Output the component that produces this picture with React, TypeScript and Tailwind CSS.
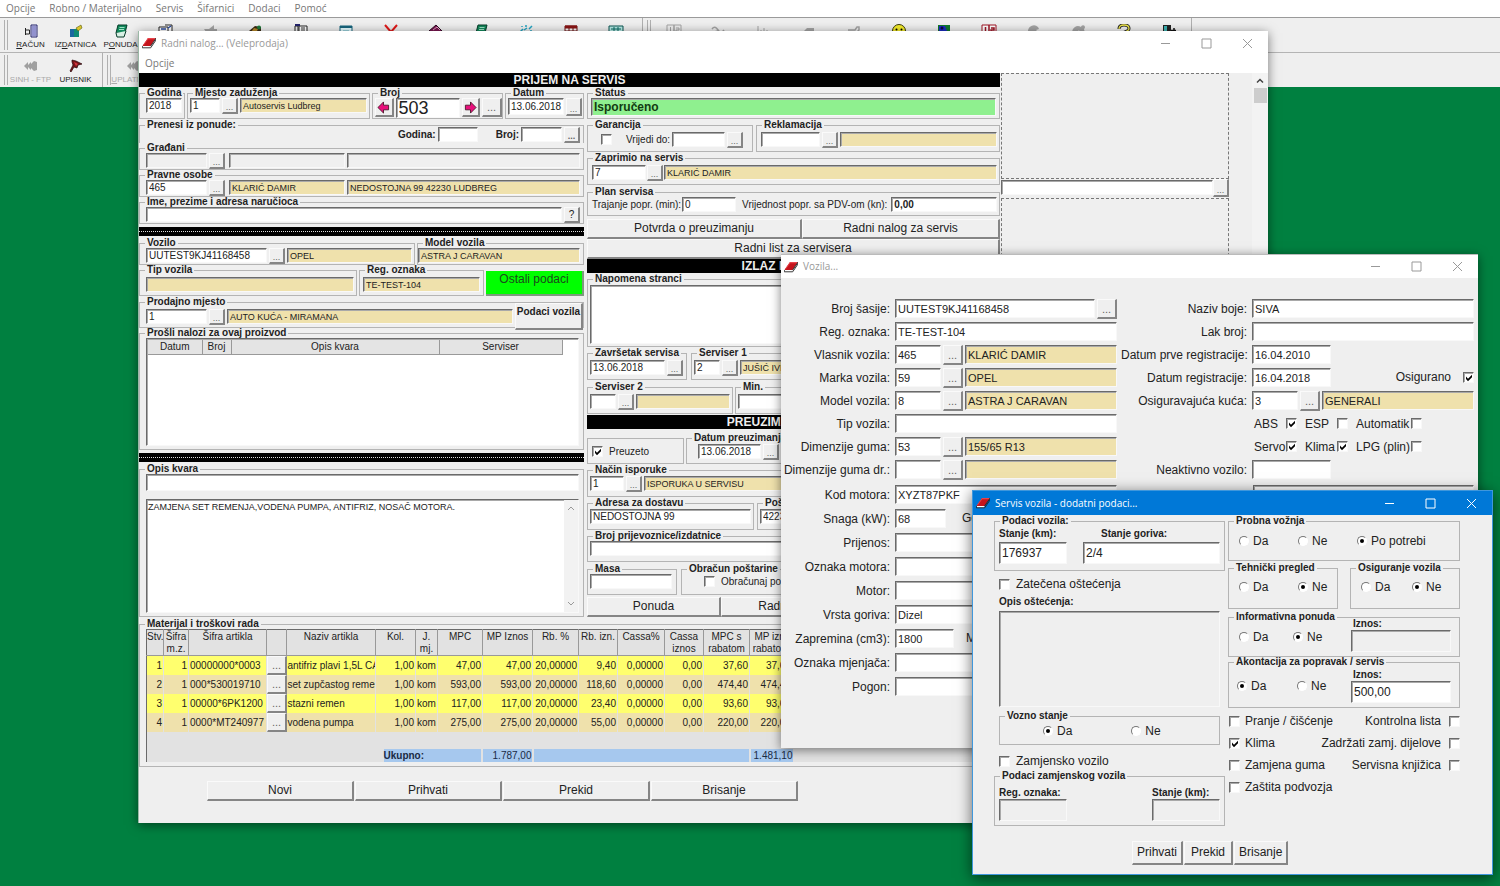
import type { ReactNode } from 'react';

type Size = 'sm' | 'lg';
type Tone = 'white' | 'wheat' | 'gray';

const sunken =
  'border border-t-[#6a6a6a] border-l-[#6a6a6a] border-r-[#f8f8f8] border-b-[#f8f8f8] shadow-[inset_1px_1px_0_#a9a9a9] rounded-none outline-none';
const raised =
  'border-t border-l border-r-2 border-b-2 border-t-[#fafafa] border-l-[#fafafa] border-r-[#858585] border-b-[#858585] bg-[#efefef] text-[#222]';

const toneClass: Record<Tone, string> = {
  white: 'bg-white',
  wheat: 'bg-[#efe1ac]',
  gray: 'bg-[#efefef]',
};

function Field({ label, value = '', tone = 'white', size = 'sm', className = '' }: {
  label: string;
  value?: string;
  tone?: Tone;
  size?: Size;
  className?: string;
}) {
  const smText = tone === 'wheat' ? 'text-[9px]' : 'text-[10px]';
  const sizing = size === 'sm' ? `h-[15px] pl-0.5 ${smText}` : 'h-[19px] pl-0.5 text-[11px]';
  return (
    <input
      aria-label={label}
      defaultValue={value}
      readOnly={tone !== 'white'}
      className={`min-w-0 shrink-0 text-[#222] ${sunken} ${toneClass[tone]} ${sizing} ${className}`}
    />
  );
}

function Dots({ label, size = 'sm', className = '' }: { label: string; size?: Size; className?: string }) {
  return (
    <button
      aria-label={label}
      className={`flex shrink-0 items-end justify-center leading-none text-[#666] ${raised} ${
        size === 'sm' ? 'h-4 w-4 text-[9px]' : 'h-5 w-5 pb-0.5 text-[11px]'
      } ${className}`}
    >
      ...
    </button>
  );
}

function Button({ children, className = '' }: { children: ReactNode; className?: string }) {
  return <button className={`text-[12px] leading-[15px] ${raised} ${className}`}>{children}</button>;
}

function Group({ title, box = '', className = '', children }: {
  title: string;
  box?: string;
  className?: string;
  children: ReactNode;
}) {
  return (
    <fieldset className={`min-w-0 border border-[#b4b4b4] ${box}`}>
      <legend className="ml-[5px] px-0.5 text-[10px] leading-[10px] font-bold whitespace-nowrap">{title}</legend>
      <div className={`flex items-start ${className}`}>{children}</div>
    </fieldset>
  );
}

function Check({ label, checked = false, before = false, className = '', small = false }: {
  label: string;
  checked?: boolean;
  before?: boolean;
  className?: string;
  small?: boolean;
}) {
  return (
    <label
      className={`flex items-center whitespace-nowrap ${small ? 'text-[10px]' : 'text-[12px]'} ${
        before ? 'flex-row-reverse' : ''
      } ${className}`}
    >
      <span className="grid shrink-0">
        <input
          type="checkbox"
          defaultChecked={checked}
          className={`peer col-start-1 row-start-1 h-[11px] w-[11px] appearance-none bg-white ${sunken}`}
        />
        <svg
          viewBox="0 0 11 11"
          className="pointer-events-none col-start-1 row-start-1 hidden h-[11px] w-[11px] peer-checked:block"
        >
          <path d="M3 4.600 5 6.800 9 2.800V5.200L5 9.200 3 7z" fill="#000" />
        </svg>
      </span>
      <span>{label}</span>
    </label>
  );
}

function Radio({ label, name, checked = false, className = '' }: {
  label: string;
  name: string;
  checked?: boolean;
  className?: string;
}) {
  return (
    <label className={`flex items-center gap-1 text-[12px] leading-[14px] ${className}`}>
      <span className="grid">
        <input
          type="radio"
          name={name}
          defaultChecked={checked}
          className="peer col-start-1 row-start-1 h-[10px] w-[10px] appearance-none rounded-full border border-t-[#777] border-l-[#777] border-r-white border-b-white bg-white"
        />
        <svg
          viewBox="0 0 10 10"
          className="pointer-events-none col-start-1 row-start-1 hidden h-[10px] w-[10px] peer-checked:block"
        >
          <circle cx="5" cy="5" r="2" fill="#000" />
        </svg>
      </span>
      {label}
    </label>
  );
}

function BookIcon() {
  return (
    <svg viewBox="0 0 14 12" className="h-3 w-3.5 shrink-0">
      <path d="M6 1h8L8.500 9H0.500z" fill="#c4141c" />
      <path d="M6 1h8l-.8 1.200H6.200L2 8H1z" fill="#e8434a" />
      <path d="M.5 9h8l-.3 1.500H1z" fill="#fff" />
      <path d="M.3 9v1.800h8.400L14 3V1.300L8.500 9.200" fill="none" stroke="#222" strokeWidth=".9" />
    </svg>
  );
}

function TitleBar({ title, active = false, className = '' }: { title: string; active?: boolean; className?: string }) {
  return (
    <header
      className={`flex items-center pl-[3px] font-["Open_Sans",sans-serif] text-[10px] ${
        active ? 'bg-[#0078d7] text-white' : 'bg-white text-[#999]'
      } ${className}`}
    >
      <BookIcon />
      <h2 className="ml-[5px] flex-1">{title}</h2>
      <div className="flex">
        <button aria-label="Minimize" className="flex w-[41px] justify-center">
          <svg viewBox="0 0 11 11" className="h-[11px] w-[11px]" stroke="currentColor">
            <path d="M1 5.500h9" />
          </svg>
        </button>
        <button aria-label="Maximize" className="flex w-[41px] justify-center">
          <svg viewBox="0 0 11 11" className="h-[11px] w-[11px]" stroke="currentColor" fill="none">
            <path d="M1 1h9v9H1z" />
          </svg>
        </button>
        <button aria-label="Close" className="flex w-[41px] justify-center">
          <svg viewBox="0 0 11 11" className="h-[11px] w-[11px]" stroke="currentColor">
            <path d="M1 1l9 9M10 1l-9 9" />
          </svg>
        </button>
      </div>
    </header>
  );
}

function BlackBar({ children, className = '' }: { children: ReactNode; className?: string }) {
  return (
    <h3 className={`h-[14px] bg-black text-center text-[12px] leading-[14px] font-bold text-[#eee] ${className}`}>
      {children}
    </h3>
  );
}

function Stripes() {
  return (
    <div className="mt-[3px] mb-0.5 h-[9px] border-y-[3px] border-black bg-black">
      <div className="mt-px border-t border-dotted border-[#ddd]" />
    </div>
  );
}

/* ---------- toolbar ---------- */

const icons: Record<string, ReactNode> = {
  invoice: (
    <>
      <path d="M8 1h6v12H8z" fill="#dcdcf4" stroke="#22226a" />
      <path d="M9 3h4M9 5h4M9 7h4M9 9h4M9 11h4" stroke="#4747a8" />
      <path d="M2.500 4v7M2.500 6h4v4h-4" fill="none" stroke="#222" />
    </>
  ),
  issue: (
    <>
      <path d="M2 5h9v8H2z" fill="#0e8a74" />
      <path d="M2 5h4v8H2z" fill="#1a66a0" />
      <path d="M8 4l5-3 1 3-4 3z" fill="#d9c62c" stroke="#5c5c10" strokeWidth=".6" />
    </>
  ),
  offer: (
    <>
      <path d="M5 1h9l-2 8H3z" fill="#128a5c" stroke="#063b28" />
      <path d="M3 9l1 4h7l2-6" fill="#d8f0e4" stroke="#063b28" />
      <path d="M6.500 3.500h5M6 5.500h5" stroke="#9fe0c4" />
    </>
  ),
  card: (
    <>
      <path d="M1 3h9v9H1zM7 1h7v9" fill="#fff" stroke="#222" />
      <path d="M3 5h5M10 4l3-2" stroke="#2a4aa0" strokeWidth="1.500" />
    </>
  ),
  grayTool: <path d="M1 5h5l5-4v4h3v3H9l-4 3z" fill="#a5a5a5" />,
  handshake: (
    <>
      <path d="M1 7l6-5 6 1v6H3z" fill="#3a2a12" />
      <path d="M6 4l4 1-2 4-5-1z" fill="#b98a2a" />
      <circle cx="11" cy="3.500" r="2" fill="#1c7a3a" />
    </>
  ),
  phone: (
    <>
      <path d="M2 2h3v11H2z" fill="none" stroke="#222" />
      <path d="M6 2h8v11H6z" fill="#fff" stroke="#222" />
      <path d="M8 4h4M8 6h4" stroke="#333" />
      <path d="M2 1h5" stroke="#22226a" strokeWidth="2" />
    </>
  ),
  calendar: (
    <>
      <path d="M2 2h12v11H2z" fill="#e4fbff" stroke="#16647c" />
      <path d="M2 3h12" stroke="#16647c" strokeWidth="2" />
      <path d="M5 7h6" stroke="#58aebe" />
    </>
  ),
  cross: <path d="M2 1l6 7 6-7M8 7l-5 5M8 7l5 5" fill="none" stroke="#e01818" strokeWidth="2" />,
  books: (
    <>
      <path d="M1 7l7-6 6 6-6 5z" fill="#7a1650" stroke="#2a0820" />
      <path d="M5 6l4-3 3 3" fill="none" stroke="#e4a0c4" />
    </>
  ),
  sparks: <path d="M2 8l3-3M6 6l3-2M11 5l3-3M8 1v2M4 2v1M12 7h2" stroke="#23a6c4" strokeWidth="1.500" />,
  tableRed: (
    <>
      <path d="M2 2h12v11H2z" fill="#fff" stroke="#6a1010" />
      <path d="M2 3h12" stroke="#8a1414" strokeWidth="3" />
      <path d="M2 7h12M6 4v9M10 4v9" stroke="#6a1010" />
    </>
  ),
  tableTeal: (
    <>
      <path d="M1 2h14v11H1z" fill="#b8ece8" stroke="#0a5550" />
      <path d="M3 5h10M3 8h10M6 3v10M10 3v10" stroke="#0a6c64" />
    </>
  ),
  cardsGray: (
    <>
      <path d="M1 1h7v10H1zM8 1h7v10H8z" fill="none" stroke="#a5a5a5" />
      <path d="M4.500 3v6M10 4h3v2h-3v3h3" fill="none" stroke="#a5a5a5" />
    </>
  ),
  wavesGray: <path d="M1 5q3-4 6 1t6 0M3 9q3-4 6 1" fill="none" stroke="#a5a5a5" strokeWidth="1.500" />,
  chartGray: <path d="M2 2v10h12M5 12V6M8 12V4M11 12V6" fill="none" stroke="#a5a5a5" />,
  boxGray: <path d="M2 8l4-4h7v5l-4 3H2z" fill="#a5a5a5" />,
  wrenchGray: <path d="M2 6h7l2-3 2 0v3l-3 3H2" fill="none" stroke="#a5a5a5" strokeWidth="1.500" />,
  smiley: (
    <>
      <circle cx="8" cy="7" r="6.500" fill="#f6ee2a" stroke="#3a3a08" />
      <circle cx="5.500" cy="5.500" r="1" />
      <circle cx="10.500" cy="5.500" r="1" />
      <path d="M4.500 9q3.500 3 7 0" fill="none" stroke="#000" />
    </>
  ),
  picture: (
    <>
      <path d="M2 1h12v12H2z" fill="#107a2a" />
      <path d="M3 2h6l2 5-3 3-5-3z" fill="#1c2cc4" />
      <circle cx="6" cy="4" r="1.500" fill="#0a0a40" />
    </>
  ),
  cardsRed: (
    <>
      <path d="M1 1h7v11H1zM8 1h7v11H8z" fill="#fff" stroke="#a01424" />
      <path d="M4.500 3v6M10 4h3v2h-3v3h3" fill="none" stroke="#a01424" strokeWidth="1.500" />
    </>
  ),
  globeGray: <path d="M2 8a6 6 0 0 1 10-5l1 2-3 1 3 3H2z" fill="#a5a5a5" />,
  moonGray: <path d="M1 9a6 6 0 0 1 9-6 2 2 0 1 1 3 2l1 4H9L8 6 6 9z" fill="#a5a5a5" />,
  help: (
    <>
      <path d="M3 5q0-4 5-4t5 3.500q0 2-4 3.500v2" fill="none" stroke="#222" strokeWidth="3" />
      <path d="M3 5q0-4 5-4t5 3.500q0 2-4 3.500v2" fill="none" stroke="#eee64a" strokeWidth="1.300" />
    </>
  ),
  exit: (
    <>
      <path d="M2 1h8v12H2z" fill="#222" />
      <path d="M3 2h3v10H3z" fill="#3cb4b4" />
      <path d="M10 6.500h5M13 4v5" stroke="#111" strokeWidth="1.500" />
    </>
  ),
  syncGray: <path d="M1 7l4-4v3l3-3v2l3-3 3 1v8l-3 1-3-3v2L5 8v3z" fill="#a0a0a0" />,
  pin: (
    <>
      <path d="M4 1l4 1 6 3-4 1-1 3-3-1-3 5-1-1 3-6-1-3z" fill="#7a1418" stroke="#240608" strokeWidth=".7" />
      <path d="M6 3l4 2-2 2z" fill="#d83840" />
    </>
  ),
};

const toolbarMain = [
  { icon: 'invoice', pre: '', key: 'R', post: 'AČUN' },
  { icon: 'issue', pre: 'IZ', key: 'D', post: 'ATNICA' },
  { icon: 'offer', pre: 'P', key: 'O', post: 'NUDA' },
  { icon: 'card' }, { icon: 'grayTool' }, { icon: 'handshake' }, { icon: 'phone' },
  { icon: 'calendar' }, { icon: 'cross' }, { icon: 'books' }, { icon: 'offer' },
  { icon: 'sparks' }, { icon: 'tableRed' }, { icon: 'tableTeal' },
];

const toolbarSide = [
  'cardsGray', 'wavesGray', 'chartGray', 'boxGray', 'wrenchGray', 'smiley',
  'picture', 'cardsRed', 'globeGray', 'moonGray', 'help', 'exit',
];

function ToolButton({ icon, children }: { icon: string; children?: ReactNode }) {
  return (
    <button aria-label={icon} className="flex w-[45px] shrink-0 flex-col items-center gap-0.5 pt-1.5 whitespace-nowrap">
      <svg viewBox="0 0 16 14" className="h-3.5 w-4">{icons[icon]}</svg>
      <span className="text-[8px] leading-[10px]">{children}</span>
    </button>
  );
}

function Grip() {
  return <div className="my-0.5 w-1 shrink-0 border-x border-[#b0b0b0]" />;
}

function AppToolbar() {
  return (
    <div className="border-t border-[#9a9a9a] bg-[#efefef]">
      <div className="flex h-[35px] border-b border-[#b4b4b4] pl-1">
        <Grip />
        {toolbarMain.map((t, i) => (
          <ToolButton key={i} icon={t.icon}>
            {t.pre}<u>{t.key}</u>{t.post}
          </ToolButton>
        ))}
        <div className="mr-1 ml-1 w-px bg-[#b0b0b0]" />
        <Grip />
        {toolbarSide.map((icon) => <ToolButton key={icon} icon={icon} />)}
        <div className="w-px bg-[#b0b0b0]" />
      </div>
      <div className="flex h-[34px] pl-1">
        <Grip />
        <ToolButton icon="syncGray"><span className="text-[#aaa]">SINH - FTP</span></ToolButton>
        <ToolButton icon="pin">UPISNIK</ToolButton>
        <div className="mr-1 ml-1 w-px bg-[#b0b0b0]" />
        <Grip />
        <ToolButton icon="syncGray"><span className="text-[#aaa]"><u>U</u>PLATNICA</span></ToolButton>
      </div>
    </div>
  );
}

/* ---------- work order window ---------- */

const items = [
  ['1', '1', '00000000*0003', 'antifriz plavi 1,5L CA', '1,00', 'kom', '47,00', '47,00', '20,00000', '9,40', '0,00000', '0,00', '37,60', '37,60'],
  ['2', '1', '000*530019710', 'set zupčastog reme', '1,00', 'kom', '593,00', '593,00', '20,00000', '118,60', '0,00000', '0,00', '474,40', '474,40'],
  ['3', '1', '00000*6PK1200', 'stazni remen', '1,00', 'kom', '117,00', '117,00', '20,00000', '23,40', '0,00000', '0,00', '93,60', '93,60'],
  ['4', '1', '0000*MT240977', 'vodena pumpa', '1,00', 'kom', '275,00', '275,00', '20,00000', '55,00', '0,00000', '0,00', '220,00', '220,00'],
];

const itemHeads = [
  'Stv.', 'Šifra m.z.', 'Šifra artikla', '', 'Naziv artikla', 'Kol.', 'J. mj.', 'MPC', 'MP Iznos',
  'Rb. %', 'Rb. izn.', 'Cassa%', 'Cassa iznos', 'MPC s rabatom', 'MP izn. rabatom',
];

function ItemsTable() {
  return (
    <table className="w-full table-fixed border-t border-l border-[#6a6a6a] bg-[#e2e2e2] text-[10px] leading-3">
      <colgroup>
        <col className="w-[17px]" />
        <col className="w-[25px]" />
        <col className="w-[78px]" />
        <col className="w-[20px]" />
        <col className="w-[89px]" />
        <col className="w-[40px]" />
        <col className="w-[22px]" />
        <col className="w-[45px]" />
        <col className="w-[50px]" />
        <col className="w-[46px]" />
        <col className="w-[39px]" />
        <col className="w-[47px]" />
        <col className="w-[39px]" />
        <col className="w-[46px]" />
        <col className="w-[43px]" />
        <col />
      </colgroup>
      <thead>
        <tr className="h-[26px] align-top">
          {itemHeads.map((head, i) => (
            <th key={i} className="overflow-hidden border-r border-b border-[#999] pt-px font-normal">{head}</th>
          ))}
          <th className="border-b border-[#999]" />
        </tr>
      </thead>
      <tbody>
        {items.map((row, r) => (
          <tr key={row[0]} className={`h-[19px] ${r % 2 ? 'bg-[#efe1ac]' : 'bg-[#ffff6e]'}`}>
            {row.map((cell, c) => {
              const left = c === 2 || c === 3 || c === 5;
              return [
                <td
                  key={c}
                  className={`overflow-hidden border-r border-[#e2e2e2] whitespace-nowrap ${left ? 'pl-px' : 'pr-px text-right'}`}
                >
                  {cell}
                </td>,
                c === 2 && (
                  <td key="pick">
                    <Dots label="Odaberi artikl" size="lg" className="h-[19px]" />
                  </td>
                ),
              ];
            })}
            <td />
          </tr>
        ))}
      </tbody>
      <tfoot>
        <tr className="h-[17px]"><td colSpan={16} /></tr>
        <tr className="h-[13px] text-[#1a2a44]">
          <td colSpan={5} />
          <td colSpan={3} className="pr-0.5 pl-2">
            <div className="bg-[#a6c8ee] leading-[13px] font-bold">Ukupno:</div>
          </td>
          <td className="border-r-2 border-[#e2e2e2] bg-[#a6c8ee] text-right">1.787,00</td>
          <td colSpan={5} className="border-r-2 border-[#e2e2e2] bg-[#a6c8ee]" />
          <td className="bg-[#a6c8ee] text-right">1.481,10</td>
          <td />
        </tr>
      </tfoot>
    </table>
  );
}

function ArrowButton({ label, flip = false }: { label: string; flip?: boolean }) {
  return (
    <button aria-label={label} className={`flex h-[19px] w-[19px] items-center justify-center ${raised}`}>
      <svg viewBox="0 0 14 14" className={`h-[13px] w-[13px] ${flip ? 'rotate-180' : ''}`}>
        <path d="M1 7l6-6v3.500h5.500v5H7V13z" fill="#e8107c" stroke="#401020" strokeWidth=".9" />
      </svg>
    </button>
  );
}

function CustomerColumn() {
  return (
    <div className="flex w-[445px] shrink-0 flex-col">
      <div className="flex gap-0.5">
        <Group title="Godina" box="w-[46px]" className="h-5 pl-1.5">
          <Field label="Godina" value="2018" className="w-9" />
        </Group>
        <Group title="Mjesto zaduženja" box="w-[183px]" className="h-5 gap-0.5 px-0.5">
          <Field label="Mjesto zaduženja" value="1" className="w-[30px]" />
          <Dots label="Odaberi mjesto" />
          <Field label="Naziv mjesta" value="Autoservis Ludbreg" tone="wheat" className="flex-1" />
        </Group>
        <Group title="Broj" box="w-[131px]" className="h-5 gap-0.5 pl-0.5">
          <ArrowButton label="Prethodni" />
          <input
            aria-label="Broj"
            defaultValue="503"
            className={`h-5 w-[64px] bg-white pl-0.5 text-[18px] leading-none ${sunken}`}
          />
          <ArrowButton label="Sljedeći" flip />
          <Dots label="Odaberi nalog" size="lg" className="h-[19px]" />
        </Group>
        <Group title="Datum" box="flex-1" className="h-5 gap-0.5 pl-0.5">
          <Field label="Datum" value="13.06.2018" className="h-[17px] w-[56px]" />
          <Dots label="Odaberi datum" className="h-[18px]" />
        </Group>
      </div>
      <Group title="Prenesi iz ponude:" box="mt-px border-b-0" className="-mt-[3px] items-center justify-end gap-0.5 pr-[3px] text-[10px] font-bold">
        <label className="flex items-center gap-0.5">
          Godina:<Field label="Godina ponude" className="w-10" />
        </label>
        <label className="ml-4 flex items-center gap-0.5">
          Broj:<Field label="Broj ponude" className="w-[41px]" />
        </label>
        <Dots label="Odaberi ponudu" />
      </Group>
      <Group title="Građani" className="gap-0.5 pr-[3px] pl-1.5">
        <Field label="Šifra građanina" tone="gray" className="w-[61px]" />
        <Dots label="Odaberi građanina" />
        <Field label="Ime građanina" tone="gray" className="ml-0.5 w-[116px]" />
        <Field label="Adresa građanina" tone="gray" className="flex-1" />
      </Group>
      <Group title="Pravne osobe" className="gap-0.5 pr-[3px] pl-1.5">
        <Field label="Šifra osobe" value="465" className="w-[61px]" />
        <Dots label="Odaberi osobu" />
        <Field label="Naziv osobe" value="KLARIĆ DAMIR" tone="wheat" className="ml-0.5 w-[116px]" />
        <Field label="Adresa osobe" value="NEDOSTOJNA 99 42230 LUDBREG" tone="wheat" className="flex-1" />
      </Group>
      <Group title="Ime, prezime i adresa naručioca" className="gap-0.5 pr-[3px] pl-1.5">
        <Field label="Ime, prezime i adresa naručioca" className="flex-1" />
        <button className={`h-4 w-4 text-[10px] leading-[12px] ${raised}`}>?</button>
      </Group>
      <Stripes />
      <div className="flex gap-0.5">
        <Group title="Vozilo" box="w-[276px]" className="gap-0.5 pr-0.5 pl-1.5">
          <Field label="Broj šasije" value="UUTEST9KJ41168458" className="w-[121px]" />
          <Dots label="Odaberi vozilo" />
          <Field label="Marka" value="OPEL" tone="wheat" className="flex-1" />
        </Group>
        <Group title="Model vozila" box="flex-1" className="pr-[3px]">
          <Field label="Model vozila" value="ASTRA J CARAVAN" tone="wheat" className="flex-1" />
        </Group>
      </div>
      <div className="flex gap-0.5">
        <Group title="Tip vozila" box="w-[218px]" className="h-5 pt-0.5 pr-0.5 pl-1.5">
          <Field label="Tip vozila" tone="wheat" className="flex-1" />
        </Group>
        <Group title="Reg. oznaka" box="w-[125px]" className="h-5 px-[3px] pt-0.5">
          <Field label="Reg. oznaka" value="TE-TEST-104" tone="wheat" className="flex-1" />
        </Group>
        <button className="mt-1.5 flex-1 border-r-2 border-b-2 border-[#7d9a7d] bg-[#00ff00] pb-2 text-[12px] leading-none text-[#1c4a1c]">
          Ostali podaci
        </button>
      </div>
      <Group title="Prodajno mjesto" box="mt-px" className="h-5 gap-0.5 pt-0.5 pl-1.5">
        <Field label="Prodajno mjesto" value="1" className="w-[61px]" />
        <Dots label="Odaberi prodajno mjesto" />
        <Field label="Naziv prodajnog mjesta" value="AUTO KUĆA - MIRAMANA" tone="wheat" className="flex-1" />
        <button className={`-mt-1.5 h-[27px] w-[68px] shrink-0 pb-2 text-[10px] leading-none font-bold ${raised}`}>
          Podaci vozila
        </button>
      </Group>
      <Group title="Prošli nalozi za ovaj proizvod" className="pr-1 pb-[3px] pl-1.5">
        <div className={`h-[108px] flex-1 bg-white pt-px pl-px ${sunken}`}>
          <table className="table-fixed text-[10px] leading-[14px]">
            <thead>
              <tr className="bg-[#e4e4e4]">
                <th className="w-[54px] border-r border-b border-[#999] font-normal">Datum</th>
                <th className="w-[29px] border-r border-b border-[#999] font-normal">Broj</th>
                <th className="w-[208px] border-r border-b border-[#999] font-normal">Opis kvara</th>
                <th className="w-[123px] border-r border-b border-[#999] font-normal">Serviser</th>
              </tr>
            </thead>
          </table>
        </div>
      </Group>
      <Stripes />
      <Group title="Opis kvara" box="flex-1" className="flex-col gap-2 pr-1 pb-px pl-1.5">
        <Field label="Opis kvara" className="h-[17px] w-full" />
        <div className={`flex h-[114px] w-full bg-white ${sunken}`}>
          <textarea
            aria-label="Detaljan opis kvara"
            defaultValue="ZAMJENA SET REMENJA,VODENA PUMPA, ANTIFRIZ, NOSAČ MOTORA."
            className="flex-1 resize-none overflow-hidden pt-px pl-px text-[9px] leading-3 outline-none"
          />
          <div className="flex w-[14px] flex-col items-center justify-between bg-[#f2f2f2] py-1.5 text-[#999]">
            <svg viewBox="0 0 8 5" className="h-[5px] w-2" fill="none" stroke="currentColor"><path d="M1 4l3-3 3 3" /></svg>
            <svg viewBox="0 0 8 5" className="h-[5px] w-2" fill="none" stroke="currentColor"><path d="M1 1l3 3 3-3" /></svg>
          </div>
        </div>
      </Group>
    </div>
  );
}

function ServiceColumn() {
  return (
    <div className="flex min-w-0 flex-1 flex-col">
      <Group title="Status" className="h-5 px-[3px]">
        <input
          aria-label="Status"
          readOnly
          defaultValue="Isporučeno"
          className={`h-[18px] min-w-0 flex-1 bg-[#8ff08f] pl-0.5 text-[12px] font-bold text-[#123c12] ${sunken}`}
        />
      </Group>
      <div className="mt-px flex gap-[3px]">
        <Group title="Garancija" box="w-[166px]" className="h-[21px] gap-0.5 pt-0.5 pl-[13px] text-[10px]">
          <Check label="Vrijedi do:" small className="h-[15px] gap-3.5" />
          <Field label="Vrijedi do" className="w-[53px]" />
          <Dots label="Odaberi datum garancije" />
        </Group>
        <Group title="Reklamacija" box="flex-1" className="h-[21px] gap-0.5 pt-0.5 pr-0.5 pl-1">
          <Field label="Reklamacija" className="w-[59px]" />
          <Dots label="Odaberi reklamaciju" />
          <Field label="Naziv reklamacije" tone="wheat" className="flex-1" />
        </Group>
      </div>
      <Group title="Zaprimio na servis" box="mt-px" className="h-[21px] gap-px pt-0.5 pr-0.5 pl-1">
        <Field label="Zaprimio" value="7" className="w-[54px]" />
        <Dots label="Odaberi djelatnika" />
        <Field label="Ime djelatnika" value="KLARIĆ DAMIR" tone="wheat" className="flex-1" />
      </Group>
      <Group title="Plan servisa" box="mt-0.5" className="h-[18px] items-center gap-1.5 pr-0.5 pl-1 text-[10px]">
        <label className="flex items-center gap-px">
          Trajanje popr. (min):<Field label="Trajanje popravka" value="0" className="w-[54px]" />
        </label>
        <label className="flex flex-1 items-center gap-1">
          Vrijednost popr. sa PDV-om (kn):
          <Field label="Vrijednost popravka" value="0,00" className="flex-1 font-bold" />
        </label>
      </Group>
      <div className="mt-[3px] flex">
        <Button className="w-[215px] py-px">Potvrda o preuzimanju</Button>
        <Button className="flex-1 py-px">Radni nalog za servis</Button>
      </div>
      <Button className="py-px">Radni list za servisera</Button>
      <BlackBar>IZLAZ IZ SERVISA</BlackBar>
      <Group title="Napomena stranci" box="mt-px" className="px-0.5 pt-px pb-0.5">
        <textarea aria-label="Napomena stranci" className={`h-[59px] flex-1 resize-none bg-white ${sunken}`} />
      </Group>
      <div className="mt-px flex gap-1">
        <Group title="Završetak servisa" box="w-[100px]" className="h-[21px] gap-0.5 px-0.5 pt-0.5">
          <Field label="Završetak servisa" value="13.06.2018" className="w-[75px]" />
          <Dots label="Odaberi završetak" />
        </Group>
        <Group title="Serviser 1" box="flex-1" className="h-[21px] gap-0.5 px-0.5 pt-0.5">
          <Field label="Serviser 1" value="2" className="w-[26px]" />
          <Dots label="Odaberi servisera" />
          <Field label="Ime servisera" value="JUŠIĆ IVICA" tone="wheat" className="flex-1" />
        </Group>
      </div>
      <div className="mt-0.5 flex gap-0.5">
        <Group title="Serviser 2" box="w-[146px]" className="h-[21px] gap-0.5 px-0.5 pt-0.5">
          <Field label="Serviser 2" className="w-[26px]" />
          <Dots label="Odaberi drugog servisera" />
          <Field label="Ime drugog servisera" tone="wheat" className="flex-1" />
        </Group>
        <Group title="Min." box="flex-1" className="h-[21px] px-0.5 pt-0.5">
          <Field label="Min." className="flex-1" />
        </Group>
      </div>
      <BlackBar className="mt-px">PREUZIMANJE VOZILA</BlackBar>
      <div className="mt-1 flex items-end gap-0.5">
        <div className="flex h-[26px] w-[97px] items-center border border-[#b4b4b4] pl-1">
          <Check label="Preuzeto" checked small className="gap-1.5" />
        </div>
        <Group title="Datum preuzimanja" box="flex-1" className="h-5 gap-0.5 pt-px pl-[11px]">
          <Field label="Datum preuzimanja" value="13.06.2018" className="w-[63px]" />
          <Dots label="Odaberi datum preuzimanja" />
        </Group>
      </div>
      <Group title="Način isporuke" box="mt-px" className="h-[21px] gap-0.5 px-0.5 pt-px">
        <Field label="Način isporuke" value="1" className="w-[34px]" />
        <Dots label="Odaberi način isporuke" />
        <Field label="Opis isporuke" value="ISPORUKA U SERVISU" tone="wheat" className="flex-1" />
      </Group>
      <div className="mt-px flex gap-[3px]">
        <Group title="Adresa za dostavu" box="w-[167px]" className="h-[21px] px-0.5 pt-px">
          <Field label="Adresa za dostavu" value="NEDOSTOJNA 99" className="flex-1" />
        </Group>
        <Group title="Pošta" box="flex-1" className="h-[21px] px-0.5 pt-px">
          <Field label="Pošta" value="42230" className="flex-1" />
        </Group>
      </div>
      <Group title="Broj prijevoznice/izdatnice" box="mt-px" className="h-5 px-0.5">
        <Field label="Broj prijevoznice" className="flex-1" />
      </Group>
      <div className="mt-0.5 flex gap-1">
        <Group title="Masa" box="w-[90px]" className="h-5 pr-1 pl-0.5">
          <Field label="Masa" className="flex-1" />
        </Group>
        <Group title="Obračun poštarine" box="flex-1" className="h-5 pl-[22px]">
          <Check label="Obračunaj poštarinu" small className="gap-1.5" />
        </Group>
      </div>
      <div className="mt-0.5 flex">
        <Button className="w-[134px] py-px">Ponuda</Button>
        <Button className="flex-1 py-px">Radni nalog</Button>
        <Button className="flex-1 py-px">Račun</Button>
      </div>
    </div>
  );
}

function WorkOrderWindow() {
  return (
    <section className="absolute top-[31px] left-[138px] w-[1130px] border-l border-[#9bb8a6] bg-[#efefef] shadow-[0_2px_10px_rgba(0,0,0,0.5)]">
      <TitleBar title="Radni nalog... (Veleprodaja)" className="h-6" />
      <nav className="h-[18px] bg-white pl-1.5 font-['Open_Sans',sans-serif] text-[10px] leading-[17px] text-[#777]">
        <a href="#opcije">Opcije</a>
      </nav>
      <div className="flex h-[750px]">
        <div className="w-[861px] shrink-0">
          <BlackBar>PRIJEM NA SERVIS</BlackBar>
          <div className="mt-px flex gap-[3px]">
            <CustomerColumn />
            <ServiceColumn />
          </div>
          <Group title="Materijal i troškovi rada" box="mt-0.5" className="pb-1 pl-1.5">
            <ItemsTable />
          </Group>
          <div className="mt-[14px] flex gap-px pl-[68px]">
            <Button className="w-[147px] py-px">Novi</Button>
            <Button className="w-[147px] py-px">Prihvati</Button>
            <Button className="w-[147px] py-px">Prekid</Button>
            <Button className="w-[147px] py-px">Brisanje</Button>
          </div>
        </div>
        <div className="ml-px flex w-[228px] flex-col">
          <div className="h-[106px] border border-dashed border-[#777]" />
          <div className="flex h-[18px] items-start">
            <Field label="Slika" className="mt-px h-4 flex-1" />
            <Dots label="Odaberi sliku" className="h-[18px]" />
          </div>
          <div className="mt-px flex-1 border border-dashed border-[#777]" />
        </div>
        <div className="ml-auto flex w-4 flex-col items-center bg-[#f3f3f3] pt-[5px]">
          <svg viewBox="0 0 8 5" className="h-[6px] w-2" fill="none" stroke="#444" strokeWidth="1.500">
            <path d="M1 4l3-3 3 3" />
          </svg>
          <div className="mt-1 h-[15px] w-[13px] bg-[#cdcdcd]" />
        </div>
      </div>
    </section>
  );
}

/* ---------- vehicle window ---------- */

function Row({ label, children, className = 'w-[109px]' }: { label: string; children: ReactNode; className?: string }) {
  return (
    <div className="flex h-[19px] items-center">
      <span className={`shrink-0 text-right text-[12px] whitespace-nowrap ${className}`}>{label}</span>
      <div className="ml-[5px] flex h-[19px] min-w-0 flex-1 items-start gap-0.5">{children}</div>
    </div>
  );
}

function PickRow({ label, code, name, className }: { label: string; code: string; name: string; className?: string }) {
  return (
    <Row label={label} className={className}>
      <Field label={label} value={code} size="lg" className="w-[46px]" />
      <Dots label={`Odaberi: ${label}`} size="lg" />
      <Field label={`${label} naziv`} value={name} tone="wheat" size="lg" className="flex-1" />
    </Row>
  );
}

function VehicleWindow() {
  const right = 'w-[126px]';
  return (
    <section className="absolute top-[254px] left-[781px] w-[697px] border-t border-[#bbb] bg-[#efefef] pb-[52px] shadow-[0_2px_10px_rgba(0,0,0,0.5)]">
      <TitleBar title="Vozila..." className="h-[23px]" />
      <div className="flex pt-[21px] pr-1">
        <div className="flex w-[336px] flex-col gap-1">
          <Row label="Broj šasije:">
            <Field label="Broj šasije" value="UUTEST9KJ41168458" size="lg" className="flex-1" />
            <Dots label="Odaberi šasiju" size="lg" />
          </Row>
          <Row label="Reg. oznaka:">
            <Field label="Reg. oznaka" value="TE-TEST-104" size="lg" className="flex-1" />
          </Row>
          <PickRow label="Vlasnik vozila:" code="465" name="KLARIĆ DAMIR" />
          <PickRow label="Marka vozila:" code="59" name="OPEL" />
          <PickRow label="Model vozila:" code="8" name="ASTRA J CARAVAN" />
          <Row label="Tip vozila:">
            <Field label="Tip vozila" size="lg" className="flex-1" />
          </Row>
          <PickRow label="Dimenzije guma:" code="53" name="155/65 R13" />
          <PickRow label="Dimenzije guma dr.:" code="" name="" />
          <div className="mt-0.5 flex flex-col gap-[5px]">
            <Row label="Kod motora:">
              <Field label="Kod motora" value="XYZT87PKF" size="lg" className="flex-1" />
            </Row>
            <Row label="Snaga (kW):">
              <Field label="Snaga" value="68" size="lg" className="w-[51px]" />
              <span className="ml-3.5 text-[12px]">Godina:</span>
            </Row>
            <Row label="Prijenos:"><Field label="Prijenos" size="lg" className="flex-1" /></Row>
            <Row label="Oznaka motora:"><Field label="Oznaka motora" size="lg" className="flex-1" /></Row>
            <Row label="Motor:"><Field label="Motor" size="lg" className="flex-1" /></Row>
            <Row label="Vrsta goriva:"><Field label="Vrsta goriva" value="Dizel" size="lg" className="flex-1" /></Row>
            <Row label="Zapremina (cm3):">
              <Field label="Zapremina" value="1800" size="lg" className="w-[59px]" />
              <span className="ml-2.5 text-[12px]">Masa:</span>
            </Row>
            <Row label="Oznaka mjenjača:"><Field label="Oznaka mjenjača" size="lg" className="flex-1" /></Row>
            <Row label="Pogon:"><Field label="Pogon" size="lg" className="flex-1" /></Row>
          </div>
        </div>
        <div className="ml-1 flex flex-1 flex-col gap-1">
          <Row label="Naziv boje:" className={right}>
            <Field label="Naziv boje" value="SIVA" size="lg" className="flex-1" />
          </Row>
          <Row label="Lak broj:" className={right}><Field label="Lak broj" size="lg" className="flex-1" /></Row>
          <Row label="Datum prve registracije:" className={right}>
            <Field label="Datum prve registracije" value="16.04.2010" size="lg" className="w-[79px]" />
          </Row>
          <Row label="Datum registracije:" className={right}>
            <Field label="Datum registracije" value="16.04.2018" size="lg" className="w-[79px]" />
            <Check label="Osigurano" checked before className="ml-auto gap-3" />
          </Row>
          <PickRow label="Osiguravajuća kuća:" code="3" name="GENERALI" className={right} />
          <div className="ml-[133px] grid h-[19px] grid-cols-[43px_43px_66px] items-center gap-x-2">
            <Check label="ABS" checked before className="justify-between" />
            <Check label="ESP" before className="justify-between" />
            <Check label="Automatik" before className="justify-between" />
          </div>
          <div className="ml-[133px] grid h-[19px] grid-cols-[43px_43px_66px] items-center gap-x-2">
            <Check label="Servo" checked before className="justify-between" />
            <Check label="Klima" checked before className="justify-between" />
            <Check label="LPG (plin)" before className="justify-between" />
          </div>
          <Row label="Neaktivno vozilo:" className={right}>
            <Field label="Neaktivno vozilo" size="lg" className="w-[79px]" />
          </Row>
          <div className="mt-0.5 flex pl-[132px]"><Field label="Napomena" size="lg" className="flex-1" /></div>
        </div>
      </div>
    </section>
  );
}

/* ---------- extra service data window ---------- */

function Labeled({ label, value = '', tone = 'white', className = '', text = 'mb-0.5' }: {
  label: string;
  value?: string;
  tone?: Tone;
  className?: string;
  text?: string;
}) {
  return (
    <label className={`flex flex-col text-[10px] font-bold ${className}`}>
      <span className={`leading-3 ${text}`}>{label}</span>
      <input
        defaultValue={value}
        readOnly={tone !== 'white'}
        className={`h-[22px] w-full pl-0.5 text-[12px] font-normal text-[#222] ${sunken} ${toneClass[tone]}`}
      />
    </label>
  );
}

function ExtraDataWindow() {
  return (
    <section className="absolute top-[490px] left-[972px] w-[521px] border border-[#3f97dc] bg-[#efefef] pb-[9px] shadow-[0_3px_14px_rgba(0,0,0,0.6)]">
      <TitleBar title="Servis vozila - dodatni podaci..." active className="h-6" />
      <div className="flex gap-[3px] pt-px pl-[21px]">
        <div className="flex w-[231px] flex-col">
          <Group title="Podaci vozila:" className="gap-4 px-1 pt-0.5 pb-1.5">
            <Labeled label="Stanje (km):" value="176937" className="w-[68px]" />
            <Labeled label="Stanje goriva:" value="2/4" className="flex-1" text="mb-0.5 pl-[18px]" />
          </Group>
          <div className="px-[5px]">
            <Check label="Zatečena oštećenja" className="mt-1 gap-1.5" />
            <label className="mt-0.5 block text-[10px] leading-[14px] font-bold">
              Opis oštećenja:
              <textarea readOnly className={`mt-0.5 block h-24 w-full resize-none bg-[#efefef] ${sunken}`} />
            </label>
            <Group title="Vozno stanje" box="mt-1" className="gap-[59px] pt-[3px] pb-1.5 pl-[43px]">
              <Radio label="Da" name="vozno" checked />
              <Radio label="Ne" name="vozno" />
            </Group>
            <Check label="Zamjensko vozilo" className="mt-[7px] gap-1.5" />
          </div>
          <Group title="Podaci zamjenskog vozila" box="mt-px" className="justify-between px-1 pt-1.5 pb-1">
            <Labeled label="Reg. oznaka:" tone="gray" className="w-[68px]" text="" />
            <Labeled label="Stanje (km):" tone="gray" className="w-[68px]" text="" />
          </Group>
        </div>
        <div className="flex w-[232px] flex-col">
          <Group title="Probna vožnja" className="pt-2 pb-3 pl-2.5">
            <Radio label="Da" name="probna" className="w-[59px]" />
            <Radio label="Ne" name="probna" className="w-[59px]" />
            <Radio label="Po potrebi" name="probna" checked />
          </Group>
          <div className="mt-0.5 flex justify-between">
            <Group title="Tehnički pregled" box="w-[110px]" className="pt-[7px] pb-[14px] pl-2.5">
              <Radio label="Da" name="tehnicki" className="w-[59px]" />
              <Radio label="Ne" name="tehnicki" checked />
            </Group>
            <Group title="Osiguranje vozila" box="w-[110px]" className="pt-[7px] pb-[14px] pl-2.5">
              <Radio label="Da" name="osiguranje" className="w-[51px]" />
              <Radio label="Ne" name="osiguranje" checked />
            </Group>
          </div>
          <Group title="Informativna ponuda" box="mt-[3px]" className="pb-1 pl-2.5">
            <Radio label="Da" name="informativna" className="mt-2 w-[54px]" />
            <Radio label="Ne" name="informativna" checked className="mt-2 w-[58px]" />
            <Labeled label="Iznos:" tone="gray" className="-mt-1 w-[100px]" text="pl-0.5" />
          </Group>
          <Group title="Akontacija za popravak / servis" className="pb-1 pl-2">
            <Radio label="Da" name="akontacija" checked className="mt-3 w-[60px]" />
            <Radio label="Ne" name="akontacija" className="mt-3 w-[54px]" />
            <Labeled label="Iznos:" value="500,00" className="pt-0.5 w-[100px]" text="pl-0.5" />
          </Group>
          <div className="mt-1 flex flex-col gap-1 pl-px leading-[18px]">
            <div className="flex justify-between">
              <Check label="Pranje / čišćenje" className="gap-[5px]" />
              <Check label="Kontrolna lista" before className="gap-2" />
            </div>
            <div className="flex justify-between">
              <Check label="Klima" checked className="gap-[5px]" />
              <Check label="Zadržati zamj. dijelove" before className="gap-2" />
            </div>
            <div className="flex justify-between">
              <Check label="Zamjena guma" className="gap-[5px]" />
              <Check label="Servisna knjižica" before className="gap-2" />
            </div>
            <Check label="Zaštita podvozja" className="gap-[5px]" />
          </div>
        </div>
      </div>
      <div className="mt-[15px] flex gap-px pl-[159px]">
        <Button className="px-1 py-[3px]">Prihvati</Button>
        <Button className="px-1.5 py-[3px]">Prekid</Button>
        <Button className="px-1 py-[3px]">Brisanje</Button>
      </div>
    </section>
  );
}

const menu = ['Opcije', 'Robno / Materijalno', 'Servis', 'Šifarnici', 'Dodaci', 'Pomoć'];

export default function App() {
  return (
    <main className="relative min-h-screen overflow-hidden bg-[#008040] font-['Liberation_Sans',Arial,sans-serif] text-[#222]">
      <nav className="flex h-[17px] gap-3.5 bg-white pl-1.5 font-['Open_Sans',sans-serif] text-[10px] leading-4 text-[#777]">
        {menu.map((item) => <a key={item} href="#menu">{item}</a>)}
      </nav>
      <AppToolbar />
      <WorkOrderWindow />
      <VehicleWindow />
      <ExtraDataWindow />
    </main>
  );
}
